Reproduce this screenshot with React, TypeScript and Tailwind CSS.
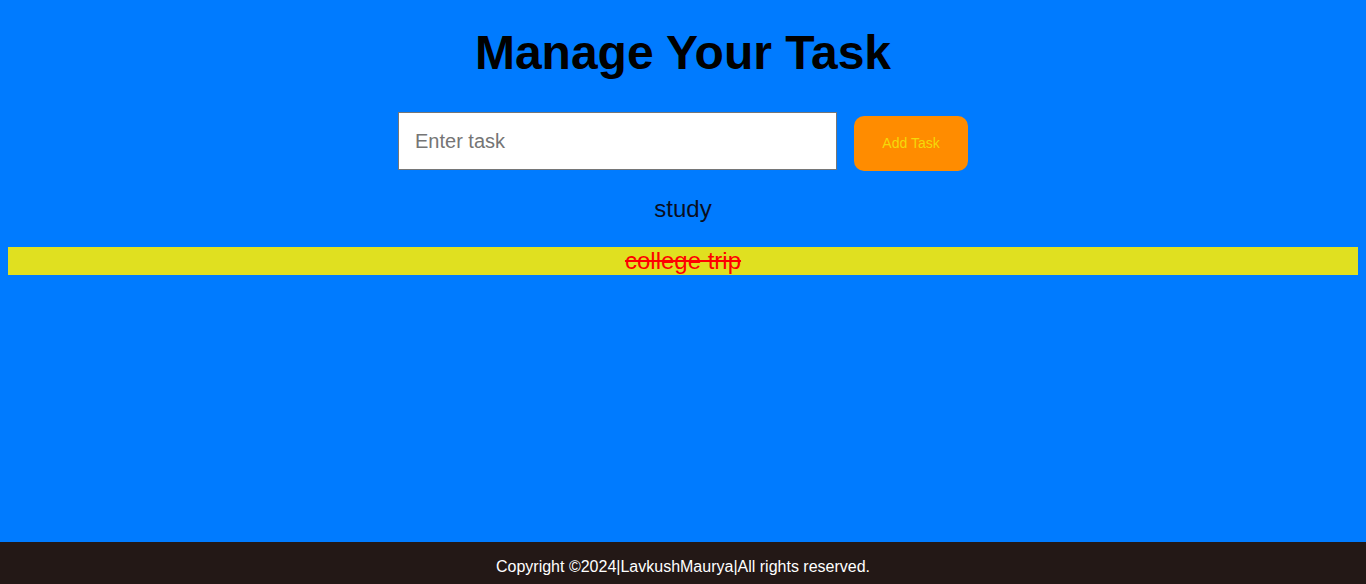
import { useState } from 'react';

type Task = {
  id: number,
  text: string,
  done: boolean,
}

const App = () => {

  const [tasks, setTasks] = useState<Task[]>([
    { id: 1, text: 'study', done: false },
    { id: 2, text: 'college trip', done: true },
  ]);
  const [input, setInput] = useState('');

  const addTask = () => {
    if (!input.trim()) return;
    setTasks([...tasks, { id: Date.now(), text: input, done: false }]);
    setInput('');
  }

  const toggle = (id: number) => {
    setTasks(tasks.map(t => t.id === id ? { ...t, done: !t.done } : t));
  }

  return (
    <div className="min-h-screen flex flex-col bg-[#007bff] font-['Liberation_Sans',Arial,sans-serif]">
      <main className="flex-1 px-2">
        <h1 className="text-center text-[48px] leading-[55px] font-bold text-black pt-[25px]">
          Manage Your Task
        </h1>

        <div className="flex justify-center items-start gap-[17px] mt-[32px]">
          <input
            value={input}
            onChange={(e) => setInput(e.target.value)}
            placeholder="Enter task"
            className="w-[439px] h-[58px] bg-white border border-[#767676] px-4 text-[20px] text-black placeholder:text-[#757575] outline-none"
          />
          <button
            onClick={addTask}
            className="mt-[4px] w-[114px] h-[55px] rounded-[10px] bg-[#ff8c00] text-[#f5d90a] text-[14px]"
          >
            Add Task
          </button>
        </div>

        <ul className="mt-[24px] flex flex-col gap-[24px]">
          {
            tasks.map((task) => {
              return (
                <li
                  key={task.id}
                  onClick={() => toggle(task.id)}
                  className={task.done
                    ? "text-center text-[24px] leading-[28px] bg-[#e0e020] text-[#ff0000] line-through cursor-pointer"
                    : "text-center text-[24px] leading-[28px] text-[#0a0f1f] cursor-pointer"}
                >
                  {task.text}
                </li>
              )
            })
          }
        </ul>
      </main>

      <footer className="h-[42px] bg-[#231816] text-white text-[16px] flex items-center justify-center pt-[8px]">
        Copyright ©2024|LavkushMaurya|All rights reserved.
      </footer>
    </div>
  )
}

export default App
